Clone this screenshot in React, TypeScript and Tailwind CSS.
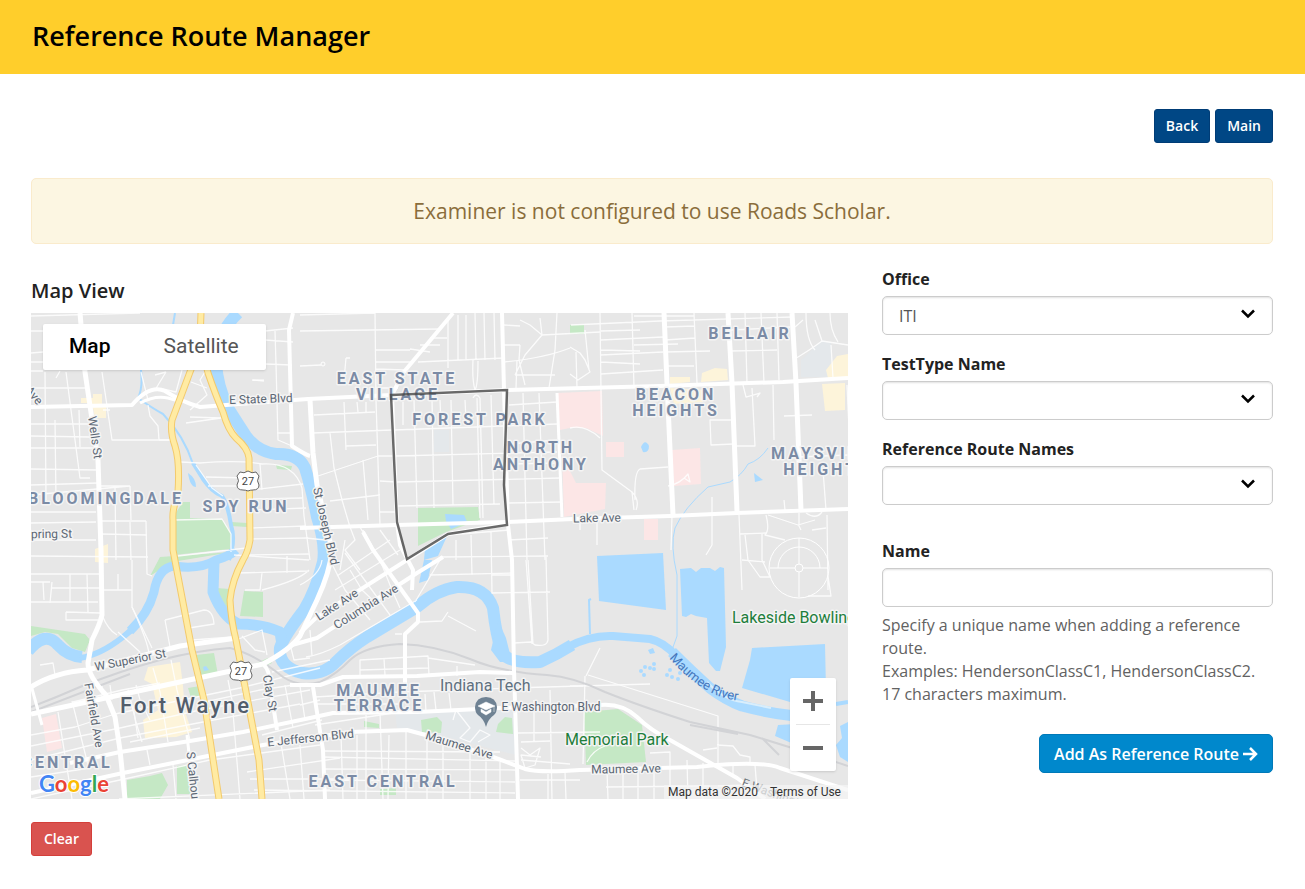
import { useState } from 'react';
import type { ReactNode } from 'react';

const hoods = [
  { x: 397, y: 384, text: 'EAST STATE' },
  { x: 398, y: 400, text: 'VILLAGE' },
  { x: 480, y: 425, text: 'FOREST PARK' },
  { x: 541, y: 453, text: 'NORTH' },
  { x: 541, y: 470, text: 'ANTHONY' },
  { x: 750, y: 339, text: 'BELLAIR' },
  { x: 676, y: 400, text: 'BEACON' },
  { x: 676, y: 416, text: 'HEIGHTS' },
  { x: 827, y: 459, text: 'MAYSVILLE' },
  { x: 827, y: 475, text: 'HEIGHTS' },
  { x: 106, y: 504, text: 'BLOOMINGDALE' },
  { x: 246, y: 512, text: 'SPY RUN' },
  { x: 379, y: 696, text: 'MAUMEE' },
  { x: 379, y: 711, text: 'TERRACE' },
  { x: 383, y: 787, text: 'EAST CENTRAL' },
  { x: 67, y: 768, text: 'CENTRAL' },
];

const streets = [
  { x: 261, y: 403, r: -2, text: 'E State Blvd' },
  { x: 91, y: 438, r: 82, text: 'Wells St' },
  { x: 48, y: 538, r: -1, text: 'Spring St' },
  { x: 31, y: 398, r: 50, text: 'Ave' },
  { x: 322, y: 527, r: 77, text: 'St Joseph Blvd' },
  { x: 597, y: 522, r: -1, text: 'Lake Ave' },
  { x: 339, y: 608, r: -33, text: 'Lake Ave' },
  { x: 368, y: 610, r: -32, text: 'Columbia Ave' },
  { x: 131, y: 664, r: -11, text: 'W Superior St' },
  { x: 90, y: 716, r: 80, text: 'Fairfield Ave' },
  { x: 266, y: 694, r: 80, text: 'Clay St' },
  { x: 311, y: 742, r: -6, text: 'E Jefferson Blvd' },
  { x: 551, y: 711, r: 0, text: 'E Washington Blvd' },
  { x: 458, y: 749, r: 17, text: 'Maumee Ave' },
  { x: 626, y: 773, r: -1, text: 'Maumee Ave' },
  { x: 190, y: 786, r: 84, text: 'S Calhoun St' },
];

const parks = [
  'M171,520 L183,502 L190,502 L190,518 L222,519 L232,535 L230,549 L174,555 Z',
  'M150,576 L160,557 L232,552 L172,562 Z',
  'M231,522 L247,523 L247,527 L231,526 Z',
  'M276,465 L292,466 L291,470 L277,469 Z',
  'M216,588 L230,589 L228,624 L214,600 Z',
  'M244,591 L263,592 L263,617 L240,616 Z',
  'M31,626 L58,630 L85,634 L90,640 L85,652 L72,648 L58,634 L45,632 L31,636 Z',
  'M196,655 L214,653 L218,675 L202,678 Z M188,688 L200,686 L203,695 L191,698 Z',
  'M252,665 L268,658 L272,663 L263,667 Z',
  'M418,508 L478,507 L480,520 L446,532 L418,546 Z',
  'M570,325 L584,325 L584,334 L570,334 Z',
  'M127,780 L150,776 L162,773 L168,785 L160,799 L127,799 Z',
  'M177,766 L190,765 L194,794 L177,794 Z',
  'M364,721 L379,724 L379,728 L364,727 Z',
  'M421,720 L437,717 L442,722 L441,733 L422,732 Z',
  'M498,724 L505,717 L512,718 L513,734 L496,732 Z',
  'M380,789 L396,788 L396,795 L380,795 Z',
  'M584,712 L618,709 L642,725 L646,762 L586,765 Z',
];

const hospitals = [
  'M557,393 L602,391 L603,436 L586,428 L570,428 L560,430 Z',
  'M562,455 L576,483 L606,483 L605,509 L564,517 Z',
  'M606,442 L624,442 L624,457 L606,457 Z',
  'M672,450 L700,448 L701,484 L674,486 Z',
  'M644,519 L658,519 L658,540 L644,540 Z',
  'M42,718 L56,714 L62,748 L47,752 Z',
];

const shops = [
  'M93,394 L102,394 L102,405 L106,405 L106,418 L95,418 L92,403 L81,403 L81,398 L93,398 Z',
  'M670,377 L690,377 L690,382 L670,384 Z M702,373 L715,368 L727,369 L728,380 L701,382 Z',
  'M670,388 L704,390 L703,402 L674,404 Z',
  'M822,384 L845,383 L845,410 L825,411 Z M826,370 L837,356 L848,354 L848,378 L828,378 Z',
  'M95,549 L108,544 L108,563 L95,562 Z',
  'M148,667 L180,662 L183,686 L185,712 L192,732 L176,737 L145,738 L143,720 L158,710 L152,684 L144,680 Z',
];

const campus = [
  'M395,712 L450,710 L495,708 L513,710 L516,755 L430,733 L397,728 Z',
  'M801,360 L822,340 L831,343 L831,377 L801,377 Z',
  'M434,430 L449,430 L449,452 L434,452 Z',
];

// riverbeds, drawn as thick strokes
const rivers = [
  { w: 12, d: 'M238,313 Q218,332 216,362 Q217,385 228,408 Q238,424 246,436 Q258,452 276,454 Q298,453 305,468 Q312,490 317,517 Q326,545 323,562 Q316,590 304,610 Q284,636 280,648 Q278,667 302,673 Q323,676 336,662 Q350,648 367,637 L417,607 Q436,590 457,587 Q486,586 493,608 Q496,635 502,653 Q510,664 540,662 Q556,655 572,645' },
  { w: 8, d: 'M540,663 Q556,654 568,647 Q590,635 613,636 L650,639 Q664,642 676,656' },
  { w: 11, d: 'M672,652 Q692,672 710,688 Q726,700 742,706 Q768,713 795,716 L830,717' },
  { w: 12, d: 'M28,651 Q45,630 58,645 Q68,656 82,657' },
  { w: 6, d: 'M80,658 Q100,655 123,637 Q148,618 154,590 Q158,568 174,566' },
  { w: 9, d: 'M130,631 Q148,614 154,592 Q158,568 174,566 Q200,570 216,560 Q230,556 236,550' },
  { w: 11, d: 'M214,562 L213,592 Q222,616 238,624 Q262,624 280,632 L282,645' },
  { w: 4, d: 'M193,463 L203,479 Q212,492 222,496 Q228,505 231,525 Q236,540 229,560' },
  { w: 2, d: 'M175,313 L173,325 M141,370 Q143,388 138,398 Q152,408 163,414 Q184,436 193,464' },
  { w: 1, d: 'M768,448 Q760,460 748,464 Q742,475 730,482 L708,487 Q684,508 675,528 Q670,545 677,575 L677,636 L672,650' },
  { w: 2, d: 'M591,599 L589,600 L590,634' },
  { w: 4, d: 'M836,704 L848,702' },
];

const ponds = [
  'M597,556 L663,553 L666,610 L599,601 Z',
  'M680,569 L691,568 L696,572 L701,568 L710,568 L715,571 L720,567 L724,568 L726,647 L720,671 L716,671 L709,663 L707,618 L696,616 L691,614 L686,617 L682,616 Z',
  'M752,648 L825,644 L826,690 L790,702 L742,688 L750,660 Z',
  'M778,725 L796,724 L796,745 L775,736 Z',
  'M848,722 L840,726 L842,738 L836,745 L840,757 L848,762 Z',
  'M445,514 L464,515 L467,522 L456,527 L451,529 L446,521 Z',
  'M425,548 L448,534 L438,556 L424,560 Z M424,560 L432,560 L428,580 L419,583 Z',
  'M188,473 Q196,478 196,487 Q190,487 188,473',
  'M641,447 Q645,438 649,446 Q649,453 643,452 Z',
  'M754,473 L763,480 L755,482 Z',
  'M491,650 L498,620 L506,638 L512,662 L500,662 Z',
  'M648,650 L653,648 L655,653 L650,654 Z',
  'M203,667 L206,666 L209,670 L204,671 Z',
];

const railroads =
  'M31,707 Q55,698 80,687 Q120,671 160,660 Q200,650 230,648 Q255,654 283,677 Q300,688 320,682 Q337,674 350,660 Q365,646 400,644 Q435,645 470,659 Q500,672 547,675 Q574,677 605,692 Q640,706 690,722 L750,735 Q800,750 848,766 M31,712 L130,674 M690,725 L738,734 M762,738 L779,755';

const lanes = [
  // north west
  'M31,316 L140,313 M31,331 L43,331 M31,353 L43,352 M31,362 L43,362 M31,371 L43,371 M60,371 L56,378 M31,388 L86,388 M31,424 L90,424 M31,436 L90,437 M31,448 L95,448 M31,469 L98,470 M31,485 L98,483 M31,495 L130,486 M98,486 L130,486 M31,512 L96,512 M31,523 L96,522',
  'M45,372 L46,500 M66,372 L80,478 L90,478 M55,420 L56,500 M79,410 L80,447 M102,372 L112,440 L171,440 M103,410 L110,410 M130,486 L131,520 M115,487 L116,560 M146,521 L147,574 L152,576 M101,521 L146,521 M31,540 L96,540 M31,556 L148,557 M101,534 L147,535 M130,522 L131,560',
  'M141,372 L148,400 M155,390 L166,372 M166,372 L155,375 M163,389 L176,392 L182,370 M148,405 L150,416 L158,426 L159,440 M171,440 L159,440 M181,462 L200,463 Q240,460 262,464 Q294,462 302,488 M196,465 L212,488 L223,496 M174,520 L222,519 L231,534 L231,552 M206,477 L248,478 M208,486 L248,486 M178,556 L246,548 M186,423 L221,418 L190,417',
  'M205,372 L200,380 L207,395 L190,410 M191,382 L207,388 M251,490 L303,484 M251,499 L302,498 M251,510 L306,508 M251,528 L306,526 M251,539 L308,538 M302,488 L304,516 L310,560 M260,464 L262,490 M252,380 L264,381 M275,331 L276,364 L278,440 L292,446 M292,365 L265,364 M292,433 L277,433 M265,340 L293,342 M293,328 L265,331',
  'M31,574 L102,574 M31,602 L98,602 M43,582 L44,600 M52,582 L50,603 M70,574 L70,602 M87,574 L88,612 M66,612 L100,613 M66,612 L66,620 L98,620 M31,582 L50,582 M52,588 L100,588 M132,560 L132,607 L152,648 M103,590 L132,590 M102,615 Q108,630 117,635 M118,574 L118,590',
  'M132,607 Q148,642 149,654 M165,620 L204,610 Q213,610 214,624 L189,628 M165,620 L170,647 M118,632 L140,652 M192,640 L232,637 M248,555 L309,554 M238,573 L309,571 M262,573 L260,590 L245,590 M287,573 L287,556 M262,590 Q300,580 309,570 M236,640 L262,630 L267,655 M234,555 L309,560 M242,636 L255,650 L265,652 M300,585 Q320,575 322,560',
  // downtown
  'M40,665 L53,663 L55,675 M31,735 L75,727 L115,714 L240,688 L320,668 M72,701 L88,765 M73,702 L122,690 L160,683 M58,712 L72,799 M128,690 L136,722 L142,742 M102,685 L102,700 M110,685 L112,700 M136,685 L140,700 L150,720 M153,668 L160,692 L168,742 M171,660 L177,690 L190,740',
  'M31,746 L120,728 L200,710 L310,690 M31,760 L120,738 L203,722 L300,704 M31,777 L90,768 M31,799 L120,780 L210,760 L320,745 M133,705 L138,738 M147,750 L150,765 M173,765 L176,799 M119,799 L330,790 M130,742 L200,728 M228,680 L232,700 L240,799 M200,703 L260,690 L300,684',
  'M285,685 L293,728 M300,686 L305,720 M280,737 L290,799 M262,735 L322,720 M266,745 L322,735 M247,772 L340,758 M250,779 L350,779 M254,790 L515,793 M300,745 L304,799 M272,672 L330,660 M291,648 L294,660 L310,658 M215,765 L220,799',
  // north centre
  'M300,315 L375,313 M300,331 L440,329 M375,313 L376,400 M376,350 L410,350 M376,362 L412,362 M376,369 L405,370 M376,388 L398,388 M410,349 L430,352 M420,345 L440,345 M430,338 L447,338 M448,320 L448,368 M458,315 L458,360 M466,315 L466,360 M475,313 L476,360 M484,313 L485,360 M494,313 L495,360 M418,362 L504,358 M300,366 L321,365 M346,358 L350,358 M346,358 L344,380',
  'M473,360 Q472,380 475,390 Q478,385 478,361 M477,398 L480,518 M473,398 Q476,392 480,398 L483,518 M314,415 L375,412 M313,433 L392,430 M376,400 L380,525 M344,402 L346,450 M330,433 L334,468 L342,500 L350,527 M346,446 L376,445 M318,476 L378,456 L395,456 M363,460 L368,520 M330,501 L380,495 M380,481 L396,482 M380,512 L396,512 M357,402 L358,412 M366,402 L366,412',
  'M394,430 L557,424 M396,456 L557,452 M397,482 L560,478 M398,506 L500,504 M414,400 L417,508 M432,400 L434,508 M451,400 L453,505 M465,400 L466,420 M491,395 L494,505 M403,402 L403,425 M440,400 L441,425 M523,393 L527,560 M539,393 L545,560 M509,405 L557,402 M509,464 L560,463 M509,503 L562,502 M509,444 L557,440',
  'M504,345 L520,345 M504,325 L520,326 M520,320 L530,325 L542,335 M542,335 L525,355 L515,375 M520,345 L519,360 L525,385 M557,313 L555,350 L549,388 M542,335 L600,332 M504,362 Q545,358 570,348 M515,375 L555,375 M516,388 L517,360 M540,318 L542,335 M570,347 L580,353 L585,360 L590,372 L578,380 L570,374 M585,330 L589,370 M576,352 L577,388',
  // north east
  'M571,325 L660,321 L793,317 M600,313 L602,470 L632,492 L634,510 M632,313 L634,388 M601,340 L663,337 M601,350 L640,351 M601,355 L663,352 M601,362 L640,364 M601,374 L663,370 M601,331 L640,330 M634,345 L678,344 M694,313 L697,383 M665,327 L695,326 M665,340 L695,338 M665,352 L710,351 M665,366 L694,366 M634,316 L694,316',
  'M745,313 L747,383 M761,313 L764,383 M777,313 L779,380 M731,351 L777,350 M731,330 L790,327 M793,360 Q810,350 822,341 L848,345 M822,341 L815,320 M830,313 Q830,330 838,342 M831,345 L833,378 M795,327 L803,320 M806,313 Q806,340 815,350 M757,397 L760,393 L746,397 L743,385 M752,388 L755,446 L737,446 M733,420 L710,420 L711,445 L734,444 M773,385 L774,440 M784,416 L812,415 M847,385 L850,450',
  'M668,467 L640,469 Q634,472 635,500 M632,492 Q640,500 636,510 M668,486 Q680,484 688,474 L690,482 L684,478 M712,497 L712,545 L706,555 M784,500 L785,510 M823,470 L826,510 M798,457 L848,455 M570,428 Q585,424 600,438 M672,516 L671,550 M597,520 L597,545 M580,520 L580,530 M739,515 L742,590 M745,535 L748,560 L760,577 L770,577 L762,560 L762,533 M740,534 L766,533',
  'M766,515 Q770,530 765,535 L785,540 M768,515 L798,525 L815,520 M806,513 Q816,520 822,512 M827,515 L828,590 M812,530 L826,528 M742,560 L765,562 M828,576 L831,596 L808,596 M799,513 L799,526 L801,530',
  // columbia avenue and lakeside
  'M300,528 L350,527 M306,538 L325,540 M350,527 L355,540 L345,550 L360,570 M345,540 L340,570 M363,530 L380,560 L392,590 L400,608 M330,560 L345,590 L370,620 M345,553 L390,615 M337,576 L390,540 M335,590 L400,550 M360,527 L373,550 M310,630 L312,656 M306,657 Q320,655 340,645 L417,600 M380,530 L398,555 M415,602 L440,560 M350,570 L362,590 L378,605',
  'M448,535 L510,530 M430,575 L512,573 M440,557 L548,556 M471,535 L472,575 M491,532 L492,593 L550,592 M456,540 L456,560 M492,575 L511,575 M526,560 L532,644 M528,560 L533,644 M546,557 L548,640 Q547,647 535,645 L531,642 L514,643 M508,540 L548,538 M420,622 L442,621 L448,612 M448,616 L476,631 M395,634 L402,634',
  // lower centre
  'M360,675 L360,660 L428,656 L429,675 M384,659 L385,675 M360,670 L428,668 M428,658 L475,665 M457,666 L457,676 M315,697 L400,692 L512,688 L650,684 M315,704 L400,704 M425,694 L426,712 M449,693 L451,710 M315,725 L400,712 M434,692 L436,710 M320,732 L322,745 M341,735 L343,799 M357,735 L357,799 M366,715 L366,799 M380,712 L383,799 M300,705 L320,700 M427,735 L427,799 M406,730 L406,799 M389,735 L388,799',
  'M443,740 L443,799 M470,752 L470,799 M486,758 L486,799 M500,762 L500,799 M322,757 L515,761 M322,769 L515,770 M322,780 L515,782 M322,751 L500,752 M453,720 L456,710 L470,728 L460,738 L470,742 L480,730 L490,735 L478,742 M521,742 L550,741 M521,760 L570,764 M550,690 L552,799 M518,733 L600,732 M534,700 L534,742 M548,774 L548,799 M565,772 L566,799 M521,748 L530,755 L540,748 L535,765 L525,768 L521,755 L541,757 M520,780 L580,780',
  'M600,648 L586,676 M588,675 L718,716 L718,765 M585,676 L583,764 M570,686 L583,686 M587,762 Q593,750 605,746 M650,753 L670,752 L670,799 M638,771 L638,799 M623,771 L623,799 M606,787 L710,786 M607,771 L608,799 M703,763 L703,799 M703,750 L717,748 M717,745 L733,746 L740,755 L750,757 L750,763 M687,760 L688,799 M654,771 L654,799 M755,765 L757,790 M733,765 L733,776 M718,786 L750,785',
];

const avenues = [
  { w: 5, d: 'M80,313 L85,372 L98,460 L101,550 L102,615 Q100,624 92,640 L88,663 Q88,676 106,695 L115,717 L120,750 L125,799' },
  { w: 4, d: 'M31,407 L132,405 Q150,384 165,391 Q182,402 200,407 L226,405 L308,399 L391,395 L507,390 L660,386 L783,382 L848,378' },
  { w: 3, d: 'M140,403 Q155,395 168,398 L182,402' },
  { w: 4, d: 'M300,528 L397,525 L507,522 L573,519 L670,516 L737,513 L848,509' },
  { w: 4, d: 'M502,313 L504,390 L508,525 L512,560 L514,670 L518,799' },
  { w: 5, d: 'M310,400 L313,453 L317,485 L332,550 Q330,572 317,600 L300,636 Q290,650 263,664 L203,677 L87,702 L31,714' },
  { w: 4, d: 'M293,313 L289,330 L292,446 Q306,455 310,456' },
  { w: 4, d: 'M453,313 L403,373 L392,395 L397,523 L400,545 L413,570 L412,590' },
  { w: 5, d: 'M664,313 L667,383 L673,515' },
  { w: 5, d: 'M728,313 L732,383 L737,511' },
  { w: 5, d: 'M792,313 L796,383 L801,510' },
  { w: 3, d: 'M557,393 L562,517' },
  { w: 5, d: 'M31,687 Q55,672 87,670 L180,646 L237,638' },
  { w: 4, d: 'M70,763 L120,752 L190,741 L243,732 L310,718 L333,713 L417,712 L500,708 L600,705 Q622,703 637,717 Q650,730 670,740 L737,778 L765,799' },
  { w: 4, d: 'M31,793 L123,773 L173,763 L263,745 L350,732 L407,730 L433,737 L493,757 Q512,764 525,769 Q540,773 580,770 L697,767 Q760,760 780,768 L848,790' },
  { w: 4, d: 'M300,633 L317,617 L407,560 L448,534 L508,524' },
  { w: 4, d: 'M292,645 L317,638 L340,623 L417,573 L443,557' },
  { w: 4, d: 'M363,532 L373,550 L418,613 L418,622 L405,634 L405,690' },
  { w: 4, d: 'M290,685 L320,685 L343,677 L417,676 L480,672 L513,673' },
  { w: 4, d: 'M313,687 L323,750 L325,799' },
  { w: 4, d: 'M263,664 Q270,670 270,685 L277,730' },
  { w: 3, d: 'M31,685 L42,725 M187,735 L194,799' },
];

const highways = [
  'M201,313 L200,340 Q196,358 190,372 L172,420 Q170,432 175,446 Q180,462 178,492 Q172,510 173,520 L173,550 L192,650 L204,700 L219,799',
  'M201,345 L208,373 Q216,396 223,412 Q228,430 236,438 Q248,448 249,458 L250,540 Q248,552 243,560 Q232,580 230,600 Q231,620 236,640 L247,697 L259,760 L262,799',
];

const dots = [
  [641, 671], [645, 667], [650, 668], [654, 664], [644, 675], [654, 669], [667, 675], [670, 670], [672, 677], [678, 679], [680, 673],
];

function Shield({ x, y }: { x: number; y: number }) {
  return (
    <g>
      <path
        d={`M${x - 8},${y - 9} q4,2 8,-1 q4,3 8,1 l3,4 q-3,5 0,9 q0,5 -6,5 q-3,0 -5,1 q-2,-1 -5,-1 q-6,0 -6,-5 q3,-4 0,-9 Z`}
        fill="#fff"
        stroke="#666"
        strokeWidth="1"
      />
      <text x={x} y={y + 4} textAnchor="middle" fontSize="11" fill="#444">27</text>
    </g>
  );
}

function StreetMap() {
  return (
    <svg
      viewBox="31 313 817 486"
      preserveAspectRatio="xMidYMid slice"
      className="block h-[486px] w-full bg-[#e7e7e7] font-[Roboto,sans-serif]"
      role="img"
      aria-label="Street map of Fort Wayne"
    >
      {campus.map((d) => <path key={d} d={d} fill="#e4e8eb" />)}
      {parks.map((d) => <path key={d} d={d} fill="#c5e8c5" />)}
      {hospitals.map((d) => <path key={d} d={d} fill="#fce6e6" />)}
      {shops.map((d) => <path key={d} d={d} fill="#fdf4da" />)}

      <g fill="none" stroke="#aadaff" strokeLinejoin="round">
        {rivers.map((r) => <path key={r.d} d={r.d} strokeWidth={r.w} />)}
      </g>
      {ponds.map((d) => <path key={d} d={d} fill="#aadaff" />)}
      {dots.map(([x, y]) => <circle key={`${x}-${y}`} cx={x} cy={y} r="2" fill="#aadaff" />)}
      <path d="M707,682 Q724,700 742,702 L771,708" fill="none" stroke="#d9eefc" strokeWidth="2" />

      <g fill="none" stroke="#fff" strokeLinejoin="round">
        <g strokeWidth="1.3" opacity="0.85">{lanes.map((d) => <path key={d} d={d} />)}</g>
        <circle cx="799" cy="568" r="30" strokeWidth="1" />
        <path d="M778,568 A21,21 0 0 1 820,568" strokeWidth="1" />
        <circle cx="799" cy="568" r="4" strokeWidth="1" />
        <path d="M770,568 H795 M803,568 H828 M799,538 V564 M799,572 V597" strokeWidth="1" />
        <circle cx="323" cy="364" r="2" strokeWidth="1" />
        <path d="M253,380 H264" strokeWidth="1" />
      </g>
      <path d={railroads} fill="none" stroke="#d2d3d6" strokeWidth="2" />
      <g fill="none" stroke="#fff" strokeLinejoin="round">
        {avenues.map((r) => <path key={r.d} d={r.d} strokeWidth={r.w} />)}
      </g>
      <g fill="none" strokeLinejoin="round">
        {highways.map((d) => <path key={d} d={d} stroke="#f3ca6c" strokeWidth="7" />)}
        {highways.map((d) => <path key={d} d={d} stroke="#ffeba3" strokeWidth="5" />)}
      </g>

      <Shield x={248} y={481} />
      <Shield x={241} y={671} />

      <g stroke="#f4f4f4" strokeWidth="3" strokeLinejoin="round" style={{ paintOrder: 'stroke' }}>
        <g fontSize="12" fill="#5b6673" textAnchor="middle">
          {streets.map((s) => (
            <text key={`${s.text}-${s.x}`} transform={`translate(${s.x} ${s.y}) rotate(${s.r})`}>{s.text}</text>
          ))}
        </g>
        <g fontSize="16" fontWeight="700" fill="#7b8ba5" textAnchor="middle" className="tracking-[3px]">
          {hoods.map((h) => <text key={`${h.text}-${h.x}`} x={h.x} y={h.y}>{h.text}</text>)}
        </g>
        <text x="120" y="713" fontSize="22" fontWeight="500" fill="#525d6b" className="tracking-[2px]">Fort Wayne</text>
        <text x="440" y="691" fontSize="16" fill="#607080">Indiana Tech</text>
        <text x="732" y="623" fontSize="16" fill="#1e7e3c">Lakeside Bowling</text>
        <text x="565" y="745" fontSize="16" fill="#1e7e3c">Memorial Park</text>
      </g>
      <path id="maumee" d="M669,658 Q690,682 710,692 Q724,700 748,702" fill="none" />
      <text fontSize="13" fill="#4577bd"><textPath href="#maumee">Maumee River</textPath></text>
      <text transform="translate(741 786) rotate(20)" fontSize="12" fill="#70757a">E Washington Blvd</text>

      {/* school pin */}
      <path d="M486,727 Q484,719 478,715 Q475,712 475,707 Q476,697 486,697 Q496,697 497,707 Q497,712 494,715 Q488,719 486,727 Z" fill="#6f8293" />
      <path d="M478,706 L486,702 L495,706 L486,710 Z M481,709 L486,712 L491,709 V712 L486,715 L481,712 Z M494,706 V712" fill="#fff" stroke="#fff" strokeWidth="0.5" />

      {/* selected route */}
      <path
        d="M391,395 L507,390 L504,485 L507,525 L448,534 L407,559 L397,522 Z"
        fill="none"
        stroke="#444"
        strokeOpacity="0.8"
        strokeWidth="2.5"
      />
    </svg>
  );
}

function MapView() {
  const [satellite, setSatellite] = useState(false);

  return (
    <div className="relative overflow-hidden font-[Roboto,sans-serif]">
      <StreetMap />

      <div className="absolute left-3 top-[11px] flex h-[46px] rounded-xs bg-white text-[21px] shadow-sm">
        <button type="button" onClick={() => setSatellite(false)} className={satellite ? 'px-[26px] text-[#565656]' : 'px-[26px] font-medium text-black'}>
          Map
        </button>
        <button type="button" onClick={() => setSatellite(true)} className={satellite ? 'px-[27px] font-medium text-black' : 'px-[27px] text-[#565656]'}>
          Satellite
        </button>
      </div>

      <div className="absolute bottom-7 right-3 flex w-[46px] flex-col items-center rounded-xs bg-white shadow-sm">
        <button type="button" aria-label="Zoom in" className="flex h-[46px] w-full items-center justify-center">
          <svg width="20" height="20" viewBox="0 0 20 20" fill="#666"><path d="M8 0h4v8h8v4h-8v8H8v-8H0V8h8z" /></svg>
        </button>
        <span className="h-px w-[34px] bg-[#e6e6e6]" />
        <button type="button" aria-label="Zoom out" className="flex h-[46px] w-full items-center justify-center">
          <svg width="20" height="20" viewBox="0 0 20 20" fill="#666"><path d="M0 8h20v4H0z" /></svg>
        </button>
      </div>

      <a href="#google" className="absolute bottom-0 left-2 text-[22px] leading-[30px] font-bold font-[Lato,sans-serif] [paint-order:stroke] [-webkit-text-stroke:2px_#fff]" aria-label="Google">
        <span className="text-[#4285f4]">G</span>
        <span className="text-[#ea4335]">o</span>
        <span className="text-[#fbbc05]">o</span>
        <span className="text-[#4285f4]">g</span>
        <span className="text-[#34a853]">l</span>
        <span className="text-[#ea4335]">e</span>
      </a>

      <div className="absolute bottom-0 right-0 flex gap-3 bg-[#f5f5f5]/70 pr-[7px] pl-1 text-xs leading-[14px] text-[#333]">
        <span>Map data ©2020</span>
        <a href="#terms">Terms of Use</a>
      </div>
    </div>
  );
}

function SelectField({ id, label, children }: { id: string; label: string; children?: ReactNode }) {
  return (
    <div>
      <label htmlFor={id} className="mb-[5px] block leading-[23px] font-bold text-[#222]">{label}</label>
      <div className="relative">
        <select id={id} className="block h-[39px] w-full appearance-none rounded-[5px] border border-[#ccc] bg-white px-4 text-[#555] shadow-[inset_0_1px_2px_rgba(0,0,0,0.12)]">
          {children}
        </select>
        <svg className="pointer-events-none absolute top-[13px] right-[18px]" width="14" height="10" viewBox="0 0 14 10" fill="none" stroke="#000" strokeWidth="2.5">
          <path d="M1 1.5l6 6 6-6" />
        </svg>
      </div>
    </div>
  );
}

export default function ReferenceRouteManager() {
  const [name, setName] = useState('');

  return (
    <div className="min-h-screen bg-white font-['Open_Sans',sans-serif] text-base text-[#222]">
      <header className="flex h-[74px] items-center bg-[#ffce2b] px-8 pb-0.5">
        <h1 className="text-[27px] font-semibold text-black">Reference Route Manager</h1>
      </header>

      <main className="pr-8 pl-[31px] pt-[35px] pb-8">
        <div className="flex justify-end gap-[5px] text-sm font-semibold text-white">
          <button type="button" className="h-[34px] rounded-[3px] border border-[#003c76] bg-[#004785] px-[11px]">Back</button>
          <button type="button" className="h-[34px] rounded-[3px] border border-[#003c76] bg-[#004785] px-[11px]">Main</button>
        </div>

        <div role="alert" className="mt-[35px] flex h-[66px] items-center justify-center rounded-[5px] border border-[#faebcc] bg-[#fcf6e2] pt-0.5 text-[21px] text-[#8a6d3b]">
          Examiner is not configured to use Roads Scholar.
        </div>

        <div className="mt-6 grid grid-cols-[817fr_391fr] gap-[34px]">
          <section className="min-w-0">
            <h2 className="mt-2 mb-2 text-xl leading-[29px] font-semibold">Map View</h2>
            <MapView />
            <button type="button" className="mt-[23px] h-[34px] rounded-[3px] border border-[#d43f3a] bg-[#d9534f] px-3 text-sm font-semibold text-white">
              Clear
            </button>
          </section>

          <form className="min-w-0" onSubmit={(e) => e.preventDefault()}>
            <div className="flex flex-col gap-[18px]">
              <SelectField id="office" label="Office">
                <option>ITI</option>
              </SelectField>
              <SelectField id="test-type" label="TestType Name" />
              <SelectField id="route-names" label="Reference Route Names" />
            </div>

            <div className="mt-[35px]">
              <label htmlFor="name" className="mb-[5px] block leading-[23px] font-bold">Name</label>
              <input
                id="name"
                type="text"
                maxLength={17}
                value={name}
                onChange={(e) => setName(e.target.value)}
                className="block h-[39px] w-full rounded-[5px] border border-[#ccc] px-4 shadow-[inset_0_1px_2px_rgba(0,0,0,0.12)]"
              />
              <p className="mt-[7px] leading-[23px] text-[#626262]">
                Specify a unique name when adding a reference route.
                <br />
                Examples: HendersonClassC1, HendersonClassC2.
                <br />
                17 characters maximum.
              </p>
            </div>

            <div className="mt-7 flex justify-end">
              <button type="submit" className="flex h-[39px] items-center gap-1 rounded-[5px] border border-[#0079b8] bg-[#0088cc] px-3.5 font-semibold text-white">
                Add As Reference Route
                <svg width="15" height="14" viewBox="0 0 15 14" fill="none" stroke="#fff" strokeWidth="2.5">
                  <path d="M0 7h13M7 1l6 6-6 6" />
                </svg>
              </button>
            </div>
          </form>
        </div>
      </main>
    </div>
  );
}
